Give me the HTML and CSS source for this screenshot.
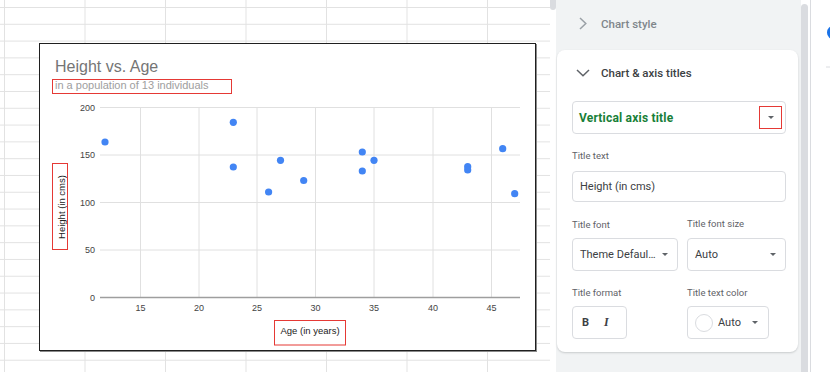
FILE: index.html
```html
<!DOCTYPE html>
<html>
<head>
<meta charset="utf-8">
<title>Chart editor</title>
<link rel="stylesheet" href="styles.css">
</head>
<body>
<div class="app">
  <div class="sheet">
    <div class="chart">
      <svg class="chart-svg" width="495" height="306" viewBox="40 44 495 306" xmlns="http://www.w3.org/2000/svg">
        <text class="c-title" x="55" y="72">Height vs. Age</text>
        <text class="c-sub" x="55" y="88.5">in a population of 13 individuals</text>
        <rect class="hl" x="52.5" y="79.5" width="179" height="14"/>
        <g class="grid">
          <line x1="100" y1="107.5" x2="520" y2="107.5"/>
          <line x1="100" y1="155" x2="520" y2="155"/>
          <line x1="100" y1="202.5" x2="520" y2="202.5"/>
          <line x1="100" y1="250" x2="520" y2="250"/>
          <line x1="140.5" y1="107" x2="140.5" y2="297"/>
          <line x1="199" y1="107" x2="199" y2="297"/>
          <line x1="257" y1="107" x2="257" y2="297"/>
          <line x1="315.5" y1="107" x2="315.5" y2="297"/>
          <line x1="374" y1="107" x2="374" y2="297"/>
          <line x1="433" y1="107" x2="433" y2="297"/>
          <line x1="491.5" y1="107" x2="491.5" y2="297"/>
        </g>
        <line class="zero" x1="100" y1="297.5" x2="520" y2="297.5"/>
        <g class="ylab">
          <text x="95" y="110.5">200</text>
          <text x="95" y="158">150</text>
          <text x="95" y="205.5">100</text>
          <text x="95" y="253">50</text>
          <text x="95" y="301">0</text>
        </g>
        <g class="xlab">
          <text x="140.5" y="311">15</text>
          <text x="199" y="311">20</text>
          <text x="257" y="311">25</text>
          <text x="315.5" y="311">30</text>
          <text x="374" y="311">35</text>
          <text x="433" y="311">40</text>
          <text x="491.5" y="311">45</text>
        </g>
        <g class="dots">
          <circle cx="105" cy="142" r="3.6"/>
          <circle cx="233.3" cy="122.3" r="3.6"/>
          <circle cx="233.3" cy="167" r="3.6"/>
          <circle cx="268.6" cy="192" r="3.6"/>
          <circle cx="280.5" cy="160.3" r="3.6"/>
          <circle cx="303.7" cy="180.5" r="3.6"/>
          <circle cx="362.3" cy="152" r="3.6"/>
          <circle cx="362.3" cy="171" r="3.6"/>
          <circle cx="374" cy="160.3" r="3.6"/>
          <circle cx="467.7" cy="166.7" r="3.6"/>
          <circle cx="467.7" cy="170" r="3.6"/>
          <circle cx="502.7" cy="148.7" r="3.6"/>
          <circle cx="514.7" cy="193.7" r="3.6"/>
        </g>
        <text class="axis-title" x="64.5" y="207" text-anchor="middle" transform="rotate(-90 64.5 207)">Height (in cms)</text>
        <rect class="hl" x="52.5" y="163.5" width="15" height="86"/>
        <text class="axis-title" x="310" y="334" text-anchor="middle">Age (in years)</text>
        <rect class="hl" x="274.5" y="320.5" width="71" height="24.5"/>
      </svg>
    </div>
  </div>

  <div class="lscroll"><div class="lthumb"></div></div>

  <div class="panel">
    <div class="collapsed">
      <svg class="chev-right" width="8" height="13" viewBox="0 0 8 13"><polyline points="1,1 6.8,6.5 1,12"/></svg>
      <span>Chart style</span>
    </div>
    <div class="card">
      <div class="card-head">
        <svg class="chev-down" width="14" height="8" viewBox="0 0 14 8"><polyline points="1,1 7,6.8 13,1"/></svg>
        <span>Chart &amp; axis titles</span>
      </div>
      <div class="select select-main">
        <span class="green">Vertical axis title</span>
        <span class="caret-box"><span class="caret"></span></span>
      </div>
      <div class="label label-first">Title text</div>
      <div class="input">Height (in cms)</div>
      <div class="grid2 row-a">
        <div class="label">Title font</div>
        <div class="label label-up">Title font size</div>
        <div class="select select-sm">
          <span class="sel-text">Theme Defaul…</span>
          <span class="caret"></span>
        </div>
        <div class="select select-sm">
          <span class="sel-text">Auto</span>
          <span class="caret"></span>
        </div>
      </div>
      <div class="grid2 row-b">
        <div class="label">Title format</div>
        <div class="label">Title text color</div>
        <div class="fmt-box">
          <span class="fmt-b">B</span>
          <span class="fmt-i">I</span>
        </div>
        <div class="color-box">
          <span class="swatch"></span>
          <span class="sel-text">Auto</span>
          <span class="caret"></span>
        </div>
      </div>
    </div>
  </div>

  <div class="vtrack"><div class="vthumb"></div></div>
  <div class="divider"></div>
  <div class="side">
    <svg width="19" height="372" viewBox="0 0 19 372">
      <circle cx="23" cy="32.5" r="7" fill="#1a73e8"/>
      <line x1="15" y1="67" x2="19" y2="67" stroke="#dadce0" stroke-width="1"/>
    </svg>
  </div>
</div>
</body>
</html>
```

FILE: styles.css
```css
html, body {
  margin: 0;
  padding: 0;
}
body {
  width: 830px;
  height: 372px;
  overflow: hidden;
  font-family: Roboto, "Noto Sans", sans-serif;
  background: #fff;
}
.app {
  display: flex;
  height: 372px;
}

/* spreadsheet area */
.sheet {
  width: 550px;
  flex: none;
  box-sizing: border-box;
  padding: 43px 0 0 39px;
  background-color: #fff;
  background-image:
    linear-gradient(to right, #e2e2e2 1px, transparent 1px),
    linear-gradient(to bottom, #e2e2e2 1px, transparent 1px);
  background-size: 80.5px 100%, 100% 16.8px;
  background-position: 4px 0, 0 7px;
}
.chart {
  width: 495px;
  height: 306px;
  border: 1px solid #1f1f1f;
  background: #fff;
  box-shadow: 1px 1px 0 #8a8a8a;
}
.chart-svg {
  display: block;
  font-family: "Liberation Sans", Arial, sans-serif;
}
.c-title {
  font-size: 16px;
  fill: #757575;
}
.c-sub {
  font-size: 11px;
  fill: #9e9e9e;
}
.hl {
  fill: none;
  stroke: #e53935;
  stroke-width: 1;
}
.grid line {
  stroke: #e0e0e0;
  stroke-width: 1;
}
.zero {
  stroke: #9e9e9e;
  stroke-width: 1.6;
}
.ylab text {
  font-size: 9px;
  fill: #444;
  text-anchor: end;
}
.xlab text {
  font-size: 9px;
  fill: #444;
  text-anchor: middle;
}
.dots circle {
  fill: #4285f4;
}
.axis-title {
  font-size: 9.5px;
  fill: #222;
}

/* sheet scrollbar */
.lscroll {
  width: 6px;
  flex: none;
  background: #fff;
}
.lthumb {
  height: 10px;
  background: #dadce0;
  border-radius: 0 0 3px 3px;
}

/* side panel */
.panel {
  width: 245px;
  flex: none;
  background: #f1f3f4;
}
.collapsed {
  height: 47px;
  margin-bottom: 3px;
  display: flex;
  align-items: center;
  padding-left: 23px;
  color: #80868b;
  font-size: 11.5px;
  font-weight: 500;
}
.chev-right {
  margin-right: 14px;
}
.chev-right polyline,
.chev-down polyline {
  fill: none;
  stroke-width: 1.5;
}
.chev-right polyline {
  stroke: #9aa0a6;
}
.chev-down polyline {
  stroke: #5f6368;
}
.card {
  margin-left: 1px;
  width: 241px;
  height: 302px;
  box-sizing: border-box;
  padding: 0 12px 0 15px;
  background: #fff;
  border-radius: 8px;
  box-shadow: 0 1px 2px rgba(60, 64, 67, 0.22);
}
.card-head {
  height: 46px;
  display: flex;
  align-items: center;
  padding-left: 4px;
  font-size: 11.5px;
  font-weight: 500;
  color: #3c4043;
}
.chev-down {
  margin-right: 11px;
}
.select {
  height: 33px;
  box-sizing: border-box;
  border: 1px solid #dadce0;
  border-radius: 4px;
  display: flex;
  align-items: center;
}
.select-main {
  margin-top: 5px;
  padding: 0 3px 0 6px;
  justify-content: space-between;
}
.green {
  color: #188038;
  font-size: 12px;
  font-weight: 700;
  letter-spacing: 0.2px;
}
.caret-box {
  width: 23px;
  height: 23px;
  box-sizing: border-box;
  border: 1px solid #e53935;
  display: flex;
  align-items: center;
  justify-content: center;
}
.caret {
  width: 0;
  height: 0;
  border-left: 3.5px solid transparent;
  border-right: 3.5px solid transparent;
  border-top: 3.5px solid #5f6368;
}
.label {
  font-size: 9.5px;
  line-height: 12px;
  color: #5f6368;
}
.label-first {
  margin-top: 16px;
  margin-bottom: 9px;
}
.input {
  height: 31px;
  box-sizing: border-box;
  border: 1px solid #dadce0;
  border-radius: 4px;
  padding-left: 7px;
  display: flex;
  align-items: center;
  font-size: 11px;
  color: #3c4043;
}
.grid2 {
  display: grid;
  grid-template-columns: 106px 99px;
  column-gap: 9px;
  row-gap: 7px;
}
.row-a {
  margin-top: 17px;
}
.row-b {
  margin-top: 16px;
}
.label-up {
  position: relative;
  top: -1.5px;
}
.select-sm {
  padding: 0 9px 0 7px;
  justify-content: space-between;
}
.sel-text {
  font-size: 11px;
  color: #3c4043;
}
.fmt-box {
  width: 55px;
  height: 33px;
  box-sizing: border-box;
  border: 1px solid #dadce0;
  border-radius: 4px;
  display: flex;
  align-items: center;
  padding-left: 9px;
  color: #3c4043;
}
.fmt-b {
  font-size: 11px;
  font-weight: 700;
}
.fmt-i {
  margin-left: 15px;
  font-family: "Liberation Serif", serif;
  font-style: italic;
  font-weight: 700;
  font-size: 12px;
}
.color-box {
  width: 82px;
  height: 33px;
  box-sizing: border-box;
  border: 1px solid #dadce0;
  border-radius: 4px;
  display: flex;
  align-items: center;
  padding-left: 7px;
}
.swatch {
  width: 18px;
  height: 18px;
  box-sizing: border-box;
  border: 1px solid #dadce0;
  border-radius: 50%;
  margin-right: 5px;
}
.color-box .caret {
  margin-left: 11px;
}

/* right scrollbar and edge */
.vtrack {
  width: 9px;
  flex: none;
  background: #fff;
}
.vthumb {
  width: 7px;
  margin-top: 4px;
  height: 368px;
  background: #dadce0;
  border-radius: 4px 4px 0 0;
}
.divider {
  width: 1px;
  flex: none;
  background: #dadce0;
}
.side {
  width: 19px;
  flex: none;
  background: #fff;
}
.side svg {
  display: block;
}
```
